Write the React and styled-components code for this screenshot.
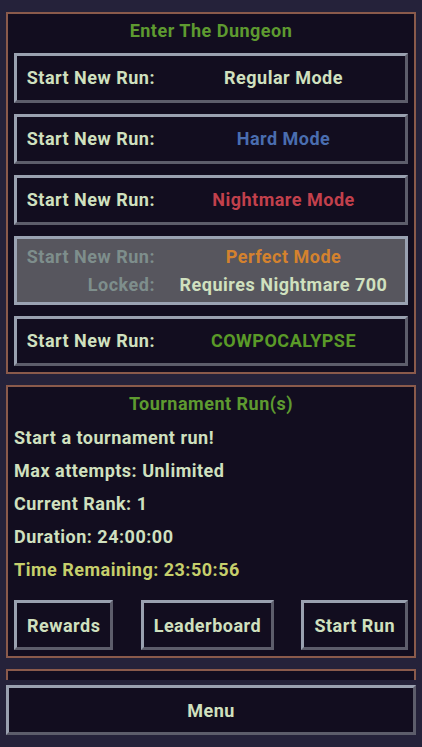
import React from 'react'
import styled, { createGlobalStyle } from 'styled-components'

const GlobalStyle = createGlobalStyle`
  html, body {
    margin: 0;
    padding: 0;
    background: #25223a;
  }
  body {
    font-family: Roboto, "Noto Sans", sans-serif;
    font-weight: 700;
    font-size: 18px;
    letter-spacing: 0.5px;
    color: #d0e0bf;
  }
`

const colors = {
    text: '#d0e0bf',
    title: '#5e9a30',
    hard: '#4a6db0',
    nightmare: '#c2404c',
    perfect: '#d4822e',
    cow: '#5a9a28',
    remaining: '#c6cf6c',
    muted: '#7e8e8c',
}

const Screen = styled.div`
  width: 422px;
  height: 747px;
  display: flex;
  flex-direction: column;
  background: #25223a;
  overflow: hidden;
`

const Scroll = styled.div`
  height: 680px;
  overflow: hidden;
  padding: 12px 6px 0;
  box-sizing: border-box;
  display: flex;
  flex-direction: column;
  gap: 11px;
`

const Panel = styled.section`
  flex-shrink: 0;
  min-height: 40px;
  background: #120d1f;
  border: 2px solid #8a5a4b;
  padding: 6px;
  display: flex;
  flex-direction: column;
`

const PanelTitle = styled.h2`
  margin: 0 0 11px;
  font-size: 18px;
  line-height: 22px;
  font-weight: 700;
  text-align: center;
  color: ${colors.title};
`

const ButtonList = styled.div`
  display: flex;
  flex-direction: column;
  gap: 11px;
`

const RunButton = styled.button`
  display: grid;
  grid-template-columns: 138px 1fr;
  column-gap: 10px;
  row-gap: 6px;
  align-content: center;
  min-height: 50px;
  padding: ${p => (p.$locked ? '7px 0 6px' : '0')};
  box-sizing: border-box;
  border: 3px solid;
  border-color: ${p => (p.$locked ? '#9aa2b2' : '#9aa1b0 #5d5d6b #5d5d6b #9aa1b0')};
  background: ${p => (p.$locked ? '#57565e' : '#120d1f')};
  font: inherit;
  letter-spacing: inherit;
  cursor: pointer;
`

const RunLabel = styled.span`
  text-align: right;
  line-height: 22px;
  color: ${p => (p.$muted ? colors.muted : colors.text)};
`

const RunValue = styled.span`
  text-align: center;
  line-height: 22px;
  padding-right: 3px;
  color: ${p => p.$color || colors.text};
`

const Info = styled.div`
  margin-top: -5px;
  display: flex;
  flex-direction: column;
`

const InfoLine = styled.p`
  margin: 0;
  line-height: 33px;
  color: ${p => p.$color || colors.text};
`

const ActionRow = styled.div`
  display: flex;
  justify-content: space-between;
  margin-top: 14px;
`

const ActionButton = styled.button`
  height: 50px;
  padding: 0 10px;
  box-sizing: border-box;
  border: 3px solid;
  border-color: #9aa1b0 #5d5d6b #5d5d6b #9aa1b0;
  background: #120d1f;
  color: ${colors.text};
  font: inherit;
  letter-spacing: inherit;
  cursor: pointer;
`

const Footer = styled.footer`
  padding: 5px 6px 0;
`

const MenuButton = styled(ActionButton)`
  width: 100%;
`

const runs = [
    { mode: 'Regular Mode' },
    { mode: 'Hard Mode', color: colors.hard },
    { mode: 'Nightmare Mode', color: colors.nightmare },
    { mode: 'Perfect Mode', color: colors.perfect, locked: 'Requires Nightmare 700' },
    { mode: 'COWPOCALYPSE', color: colors.cow },
]

export default function App () {
    return (
        <Screen>
            <GlobalStyle />
            <Scroll>
                <Panel>
                    <PanelTitle>Enter The Dungeon</PanelTitle>
                    <ButtonList>
                        {runs.map(run => (
                            <RunButton key={run.mode} $locked={!!run.locked}>
                                <RunLabel $muted={!!run.locked}>Start New Run:</RunLabel>
                                <RunValue $color={run.color}>{run.mode}</RunValue>
                                {run.locked && (
                                    <>
                                        <RunLabel $muted>Locked:</RunLabel>
                                        <RunValue>{run.locked}</RunValue>
                                    </>
                                )}
                            </RunButton>
                        ))}
                    </ButtonList>
                </Panel>

                <Panel>
                    <PanelTitle>Tournament Run(s)</PanelTitle>
                    <Info>
                        <InfoLine>Start a tournament run!</InfoLine>
                        <InfoLine>Max attempts: Unlimited</InfoLine>
                        <InfoLine>Current Rank: 1</InfoLine>
                        <InfoLine>Duration: 24:00:00</InfoLine>
                        <InfoLine $color={colors.remaining}>Time Remaining: 23:50:56</InfoLine>
                    </Info>
                    <ActionRow>
                        <ActionButton>Rewards</ActionButton>
                        <ActionButton>Leaderboard</ActionButton>
                        <ActionButton>Start Run</ActionButton>
                    </ActionRow>
                </Panel>

                <Panel />
            </Scroll>
            <Footer>
                <MenuButton>Menu</MenuButton>
            </Footer>
        </Screen>
    )
}
